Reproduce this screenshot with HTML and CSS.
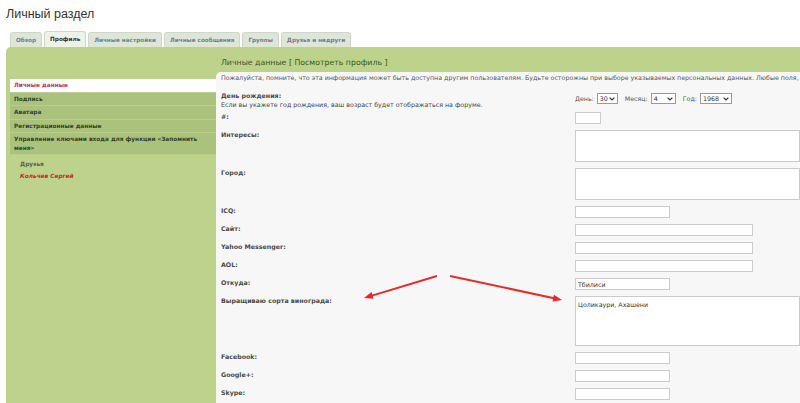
FILE: index.html
```html
<!DOCTYPE html>
<html lang="ru">
<head>
<meta charset="utf-8">
<title>Личный раздел</title>
<link rel="stylesheet" href="styles.css">
</head>
<body>
<h1 class="page-title">Личный раздел</h1>
<nav class="tabs">
  <a class="tab">Обзор</a>
  <a class="tab active">Профиль</a>
  <a class="tab">Личные настройки</a>
  <a class="tab">Личные сообщения</a>
  <a class="tab">Группы</a>
  <a class="tab">Друзья и недруги</a>
</nav>
<div class="panel">
  <aside class="side">
    <ul class="menu">
      <li class="menu-item active">Личные данные</li>
      <li class="menu-item">Подпись</li>
      <li class="menu-item">Аватара</li>
      <li class="menu-item">Регистрационные данные</li>
      <li class="menu-item">Управление ключами входа для функции «Запомнить меня»</li>
    </ul>
    <div class="friends">
      <div class="friends-title">Друзья</div>
      <div class="friend">Кольчев Сергей</div>
    </div>
  </aside>
  <main class="content">
    <div class="content-head">Личные данные <span class="head-link">[ Посмотреть профиль ]</span></div>
    <div class="box">
      <div class="notice">Пожалуйста, помните, что эта информация может быть доступна другим пользователям. Будьте осторожны при выборе указываемых персональных данных. Любые поля, помеченные звёздочкой, обязательны для заполнения.</div>
      <div class="form">
        <div class="row row-birthday">
          <div class="label birthday-label"><b>День рождения:</b><br><span class="sub">Если вы укажете год рождения, ваш возраст будет отображаться на форуме.</span></div>
          <div class="field date">
            <span class="date-lbl">День:</span>
            <span class="select sel-day"><span>30</span><svg width="6" height="4" viewBox="0 0 6 4"><path d="M0.6 0.6 L3 3 L5.4 0.6" fill="none" stroke="#333" stroke-width="1.2"/></svg></span>
            <span class="date-lbl">Месяц:</span>
            <span class="select sel-month"><span>4</span><svg width="6" height="4" viewBox="0 0 6 4"><path d="M0.6 0.6 L3 3 L5.4 0.6" fill="none" stroke="#333" stroke-width="1.2"/></svg></span>
            <span class="date-lbl">Год:</span>
            <span class="select sel-year"><span>1968</span><svg width="6" height="4" viewBox="0 0 6 4"><path d="M0.6 0.6 L3 3 L5.4 0.6" fill="none" stroke="#333" stroke-width="1.2"/></svg></span>
          </div>
        </div>
        <div class="row"><div class="label">#:</div><input class="input w-xs" type="text"></div>
        <div class="row"><div class="label">Интересы:</div><textarea class="area"></textarea></div>
        <div class="row"><div class="label">Город:</div><textarea class="area"></textarea></div>
        <div class="row"><div class="label">ICQ:</div><input class="input w-s" type="text"></div>
        <div class="row"><div class="label">Сайт:</div><input class="input w-m" type="text"></div>
        <div class="row"><div class="label">Yahoo Messenger:</div><input class="input w-m" type="text"></div>
        <div class="row"><div class="label">AOL:</div><input class="input w-m" type="text"></div>
        <div class="row"><div class="label">Откуда:</div><input class="input w-s" type="text" value="Тбилиси"></div>
        <div class="row"><div class="label">Выращиваю сорта винограда:</div><textarea class="area area-tall">Цоликаури, Ахашени</textarea></div>
        <div class="row"><div class="label">Facebook:</div><input class="input w-s" type="text"></div>
        <div class="row"><div class="label">Google+:</div><input class="input w-s" type="text"></div>
        <div class="row"><div class="label">Skype:</div><input class="input w-s" type="text"></div>
      </div>
    </div>
  </main>
</div>
<svg class="arrows" width="800" height="403" viewBox="0 0 800 403">
  <line x1="437" y1="276" x2="372" y2="295.6" stroke="#e52a2a" stroke-width="2"/>
  <polygon points="364,298 373.6,298.75 371.6,292.05" fill="#e52a2a"/>
  <line x1="450" y1="276" x2="554" y2="298.2" stroke="#e52a2a" stroke-width="2"/>
  <polygon points="562,300 552.5,301.5 553.9,294.7" fill="#e52a2a"/>
</svg>
</body>
</html>
```
FILE: styles.css
```css
html, body {
  margin: 0;
  padding: 0;
}
body {
  width: 800px;
  height: 403px;
  overflow: hidden;
  background: #ffffff;
  font-family: "DejaVu Sans", Verdana, sans-serif;
  color: #333;
  position: relative;
}
.page-title {
  margin: 0;
  padding: 6px 0 0 6px;
  font-family: "Liberation Sans", Arial, sans-serif;
  font-size: 12.5px;
  line-height: 16px;
  font-weight: normal;
  color: #333;
}
.tabs {
  display: flex;
  align-items: flex-end;
  gap: 2px;
  margin: 9px 0 0 10px;
  height: 16px;
}
.tab {
  display: block;
  height: 15px;
  box-sizing: border-box;
  padding: 0 5px;
  background: #dfe6d9;
  border: 1px solid #cfd8c7;
  border-bottom: none;
  border-radius: 3px 3px 0 0;
  font-size: 5.7px;
  font-weight: bold;
  line-height: 14px;
  color: #6f7f86;
  white-space: nowrap;
}
.tab.active {
  height: 16px;
  line-height: 15px;
  background: #eef2e9;
  color: #333;
}
.panel {
  display: flex;
  margin-left: 6px;
  min-height: 360px;
  background: #bdd38b;
  border-radius: 5px 0 0 0;
}
.side {
  width: 210px;
  flex: none;
  box-sizing: border-box;
  padding: 32px 0 0 4px;
}
.menu {
  list-style: none;
  margin: 0;
  padding: 0;
}
.menu-item {
  padding: 2px 4px;
  font-size: 5.8px;
  font-weight: bold;
  line-height: 8.5px;
  color: #34412b;
  background: #abc27c;
  border-bottom: 1px solid #b9ce8c;
}
.menu-item.active {
  background: #ffffff;
  color: #c8304e;
}
.friends {
  padding: 5px 0 0 10px;
  font-size: 5.8px;
  font-weight: bold;
  line-height: 9px;
}
.friends-title {
  color: #55663f;
}
.friend {
  margin-top: 3px;
  color: #cc1f1f;
  font-style: italic;
}
.content {
  flex: 1;
  display: flex;
  flex-direction: column;
  min-width: 0;
}
.content-head {
  height: 25px;
  box-sizing: border-box;
  padding: 10px 0 0 5px;
  font-size: 7.8px;
  line-height: 11px;
  color: #3f4d37;
  white-space: nowrap;
}
.head-link {
  color: #2f5a1c;
}
.box {
  flex: 1;
  background: #f7f7f7;
  border-radius: 5px 0 0 0;
  padding: 1px 0 0 5px;
  overflow: hidden;
}
.notice {
  font-size: 6.3px;
  line-height: 9px;
  color: #555;
  white-space: nowrap;
  overflow: hidden;
}
.form {
  margin-top: 9px;
}
.row {
  display: flex;
  align-items: flex-start;
  margin-bottom: 6px;
}
.row-birthday {
  margin-bottom: 3px;
}
.label {
  width: 354px;
  flex: none;
  font-size: 6.3px;
  font-weight: bold;
  line-height: 10px;
  color: #4a4a4a;
}
.birthday-label {
  line-height: 9px;
}
.sub {
  font-weight: normal;
  color: #444;
}
.date {
  display: flex;
  align-items: center;
  margin-top: 2px;
  font-size: 6.3px;
  color: #555;
}
.date-lbl {
  margin-right: 3px;
}
.select {
  display: inline-flex;
  align-items: center;
  justify-content: space-between;
  height: 11px;
  box-sizing: border-box;
  padding: 0 2px;
  background: #fff;
  border: 1px solid #9a9a9a;
  font-size: 6.3px;
  color: #333;
  margin-right: 7px;
}
.sel-day { width: 21px; }
.sel-month { width: 25px; }
.sel-year { width: 32px; }
.input {
  display: block;
  height: 12px;
  box-sizing: border-box;
  margin: 0;
  padding: 0 2px;
  border: 1px solid #cbcbcb;
  background: #fff;
  font-family: "DejaVu Sans", Verdana, sans-serif;
  font-size: 6.3px;
  color: #333;
  outline: none;
}
.w-xs { width: 26px; }
.w-s { width: 95px; }
.w-m { width: 178px; }
.area {
  display: block;
  width: 240px;
  height: 32px;
  box-sizing: border-box;
  margin: 0;
  padding: 3px 2px;
  border: 1px solid #cbcbcb;
  background: #fff;
  font-family: "DejaVu Sans", Verdana, sans-serif;
  font-size: 6.3px;
  line-height: 9px;
  color: #333;
  resize: none;
  outline: none;
}
.area-tall {
  height: 50px;
}
.arrows {
  position: absolute;
  top: 0;
  left: 0;
  pointer-events: none;
}
```
